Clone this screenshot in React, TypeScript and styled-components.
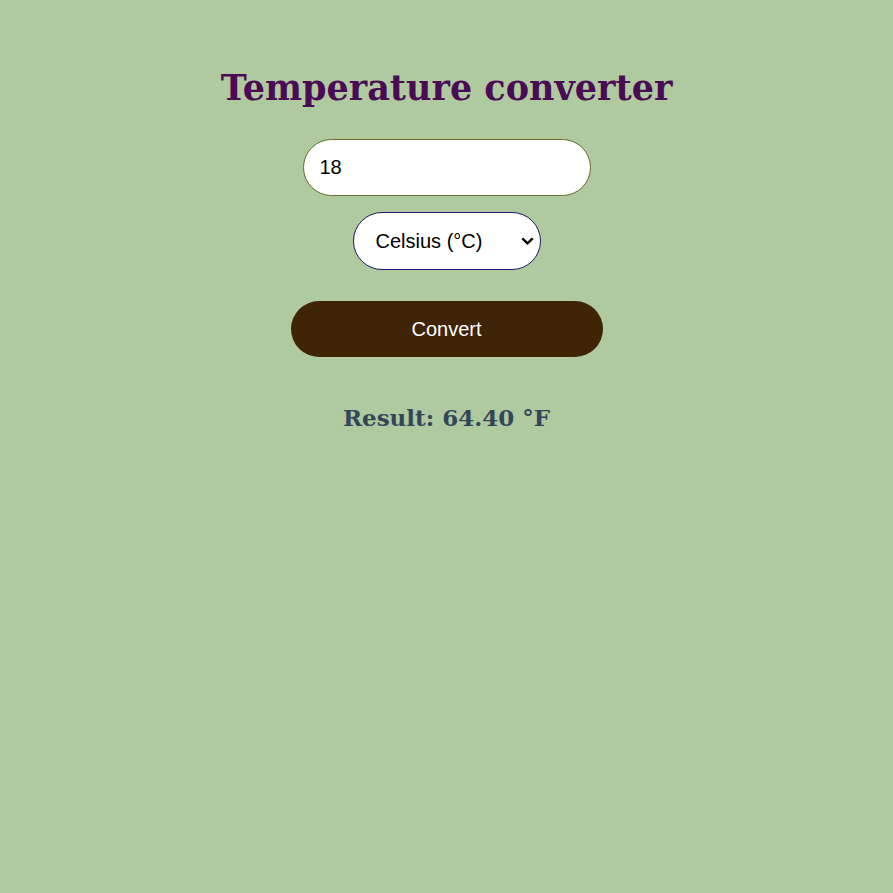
import React, { useState } from "react";
import styled, { createGlobalStyle } from "styled-components";

const Global = createGlobalStyle`
  html, body { margin: 0; padding: 0; background: #afca9f; }
  body { font-family: "Liberation Sans", Arial, sans-serif; }
`;

const Page = styled.main`
  display: flex;
  flex-direction: column;
  align-items: center;
  padding-top: 64px;
`;

const Title = styled.h1`
  margin: 0 0 27px;
  font-family: "DejaVu Serif", Georgia, serif;
  font-weight: bold;
  font-size: 35px;
  line-height: 48px;
  color: #4b0a55;
`;

const Form = styled.form`
  display: flex;
  flex-direction: column;
  align-items: center;
`;

const NumberInput = styled.input`
  box-sizing: border-box;
  width: 288px;
  height: 57px;
  padding: 0 16px;
  border: 1px solid #6b6b2f;
  border-radius: 29px;
  background: #fff;
  font-family: "Liberation Sans", Arial, sans-serif;
  font-size: 20px;
  color: #000;
  outline: none;
`;

const SelectWrap = styled.div`
  position: relative;
  margin-top: 16px;
  width: 188px;
  height: 58px;
`;

const UnitSelect = styled.select`
  box-sizing: border-box;
  appearance: none;
  -webkit-appearance: none;
  width: 100%;
  height: 100%;
  padding: 0 24px 0 22px;
  border: 1px solid #1a1a6b;
  border-radius: 29px;
  background: #fff;
  font-family: "Liberation Sans", Arial, sans-serif;
  font-size: 20px;
  color: #000;
`;

const Chevron = styled.svg`
  position: absolute;
  right: 7px;
  top: 25px;
  width: 13px;
  height: 8px;
  pointer-events: none;
`;

const ConvertButton = styled.button`
  box-sizing: border-box;
  margin-top: 31px;
  width: 312px;
  height: 56px;
  border: none;
  border-radius: 28px;
  background: #3f2506;
  color: #fff;
  font-family: "Liberation Sans", Arial, sans-serif;
  font-size: 20px;
  cursor: pointer;
`;

const Result = styled.p`
  margin: 45px 0 0;
  font-family: "DejaVu Serif", Georgia, serif;
  font-weight: bold;
  font-size: 23px;
  line-height: 32px;
  color: #34465a;
`;

export default function App() {
  const [value, setValue] = useState("18");
  const [unit, setUnit] = useState("C");
  const [result, setResult] = useState("64.40 °F");

  const convert = (e: React.FormEvent) => {
    e.preventDefault();
    const n = parseFloat(value);
    if (isNaN(n)) return;
    if (unit === "C") setResult(`${((n * 9) / 5 + 32).toFixed(2)} °F`);
    else setResult(`${(((n - 32) * 5) / 9).toFixed(2)} °C`);
  };

  return (
    <Page>
      <Global />
      <Title>Temperature converter</Title>
      <Form onSubmit={convert}>
        <NumberInput type="text" value={value} onChange={(e) => setValue(e.target.value)} />
        <SelectWrap>
          <UnitSelect value={unit} onChange={(e) => setUnit(e.target.value)}>
            <option value="C">Celsius (°C)</option>
            <option value="F">Fahrenheit (°F)</option>
          </UnitSelect>
          <Chevron viewBox="0 0 13 8" aria-hidden="true">
            <path d="M1.3 1.3 L6.5 6.3 L11.7 1.3" fill="none" stroke="#000" strokeWidth="2.3" />
          </Chevron>
        </SelectWrap>
        <ConvertButton type="submit">Convert</ConvertButton>
      </Form>
      <Result>Result: {result}</Result>
    </Page>
  );
}
